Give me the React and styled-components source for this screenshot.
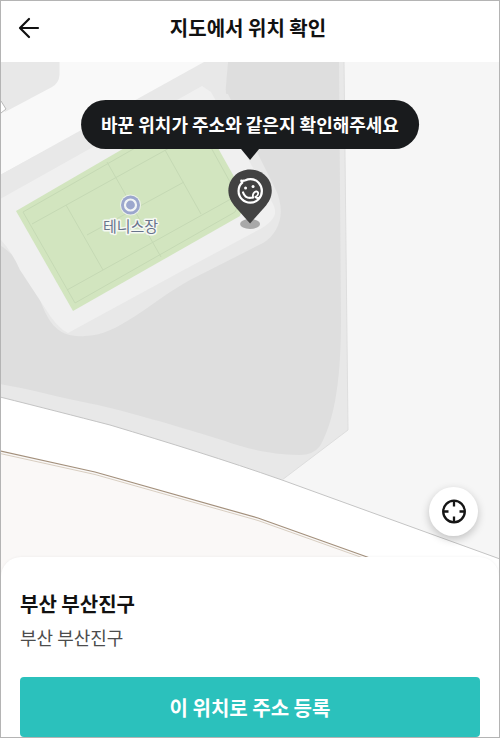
import React from 'react';
import styled, { createGlobalStyle } from 'styled-components';

const colors = {
  ink: '#191b1d',
  mint: '#2bc1bc',
  frame: '#b4b4b4',
};

const GlobalStyle = createGlobalStyle`
  * {
    box-sizing: border-box;
  }

  body {
    margin: 0;
    background: #fff;
    font-family: 'Noto Sans CJK KR', 'Noto Sans', sans-serif;
    color: ${colors.ink};
  }

  button {
    font-family: inherit;
    border: 0;
    padding: 0;
    cursor: pointer;
  }
`;

const Screen = styled.div`
  display: flex;
  flex-direction: column;
  height: 100vh;
  min-height: 480px;
  border: 1px solid ${colors.frame};
  overflow: hidden;
`;

const Header = styled.header`
  display: grid;
  grid-template-columns: 56px 1fr 60px;
  align-items: center;
  height: 61px;
  padding-bottom: 8px;
  flex-shrink: 0;
`;

const BackButton = styled.button`
  display: flex;
  justify-content: center;
  background: none;
`;

const Title = styled.h1`
  margin: 0;
  font-size: 20px;
  line-height: 28px;
  font-weight: 700;
  text-align: center;
  color: #111;
`;

const MapArea = styled.main`
  position: relative;
  flex: 1;
  min-height: 0;
`;

const MapDrawing = styled.svg`
  display: block;
  width: 100%;
  height: 100%;
`;

const Marker = styled.div`
  position: absolute;
  top: 38px;
  left: 50%;
  transform: translateX(-50%);
  display: flex;
  flex-direction: column;
  align-items: center;
`;

const Tooltip = styled.p`
  margin: 0;
  padding: 11px 20px;
  border-radius: 25px;
  background: ${colors.ink};
  color: #fff;
  font-size: 18px;
  line-height: 27px;
  font-weight: 700;
  white-space: nowrap;
`;

const TooltipArrow = styled.span`
  border: 9px solid transparent;
  border-top: 11px solid ${colors.ink};
  border-bottom-width: 8px;
`;

const LocateButton = styled.button`
  position: absolute;
  right: 21px;
  bottom: 41px;
  display: flex;
  align-items: center;
  justify-content: center;
  width: 49px;
  height: 49px;
  border-radius: 50%;
  background: #fff;
  box-shadow: 0 3px 8px rgba(0, 0, 0, 0.22);
`;

const Sheet = styled.section`
  position: relative;
  flex-shrink: 0;
  margin-top: -20px;
  padding: 32px 19px 0;
  border-radius: 20px 20px 0 0;
  background: #fff;
  box-shadow: 0 0 3px rgba(0, 0, 0, 0.06);
`;

const Place = styled.h2`
  margin: 0 0 4px;
  font-size: 20px;
  line-height: 30px;
  font-weight: 700;
  color: #111;
`;

const Address = styled.p`
  margin: 0 0 26px;
  font-size: 18px;
  line-height: 28px;
  color: #4c4c4c;
`;

const SubmitButton = styled.button`
  display: block;
  width: 100%;
  height: 60px;
  border-radius: 4px;
  background: ${colors.mint};
  color: #fff;
  font-size: 20px;
  font-weight: 700;
`;

const ArrowIcon = () => (
  <svg width="22" height="22" viewBox="0 0 22 22" fill="none" stroke="#111" strokeWidth="2.2" strokeLinecap="round" strokeLinejoin="round">
    <path d="M20 11H2.500M11 2 2 11l9 9" />
  </svg>
);

const LocateIcon = () => (
  <svg width="26" height="26" viewBox="0 0 26 26" fill="none" stroke="#151515" strokeWidth="2.3">
    <circle cx="13" cy="12.500" r="10.800" />
    <path d="M13 2v5.500M13 17.500v5.500M2 12.500h5.500M18.500 12.500h5.500" />
  </svg>
);

const PinIcon = () => (
  <svg width="46" height="64" viewBox="0 0 46 64" fill="none">
    <ellipse cx="23" cy="56" rx="10" ry="5" fill="#a8a8a8" />
    <path d="M23 1.500C10.800 1.500 1.300 11 1.300 22.500c0 7 3 11.500 7 16.500L23 55.500 37.700 39c4-5 7-9.500 7-16.500C44.700 11 35.200 1.500 23 1.500Z" fill="#424242" />
    <g stroke="#fff" strokeWidth="2.200" strokeLinecap="round" strokeLinejoin="round">
      <path d="M18.500 12.300c1.500-.8 3-1.100 5-1.100 6.500 0 11.300 5.300 11.300 11.800S29.700 34.700 23.200 34.700 11.500 29.500 11.500 23c0-3.300 1.300-6.300 3.700-8.300-.8-.6-1-1.300-1-2 1.500.3 2.900.1 4.300-.4Z" />
      <path d="M16 24.500c1.500 4.300 5 6.300 10 5" />
      <path d="M26 29.500c-.8-3 1-6.200 3.500-6 2.500.3 2 4.300-1.200 5.300M28.300 29c1.400 1.200 3 1.200 4.400.2" strokeWidth="1.800" />
    </g>
    <circle cx="18.500" cy="20" r="1.500" fill="#fff" />
    <circle cx="26" cy="18.500" r="1.500" fill="#fff" />
  </svg>
);

const MapLabel = styled.text`
  font-size: 15px;
  fill: #68748c;
  stroke: #f5f8f2;
  stroke-width: 3px;
  stroke-linejoin: round;
  paint-order: stroke;
  text-anchor: middle;
`;

const StreetMap = () => (
  <MapDrawing viewBox="1 62 498 515" preserveAspectRatio="xMidYMin slice">
    <rect x="1" y="62" width="498" height="515" fill="#f6f6f6" />

    {/* land around the court */}
    <path d="M0 62H344L348 430 282 480 0 397Z" fill="#e8e8e8" />
    <path d="M228 62H339L341 320C341 390 332 425 320 446Q313 455 300 455C270 455 245 448 225 441C180 427 120 409 83 402C50 395 25 388 0 384V240L150 100 225 97Z" fill="#dedede" />
    <path d="M228 62C222 80 225 95 232 110L150 100 204 62Z" fill="#e8e8e8" />

    {/* path and pavement */}
    <path d="M0 62H204L0 175Z" fill="#f9f9f9" />
    <path d="M0 175 150 94H228L275 188C286 210 281 232 263 243L190 280C150 302 118 336 85 336C60 338 50 325 42 305C35 285 25 262 0 245Z" fill="#e8e8e8" />
    <path d="M0 199 202 86 211 92 273 204C278 214 274 220 262 228L180 272 68 333Q57 328 45 308L20 270Q11 250 0 239Z" fill="#f0f0f0" />
    <path d="M0 62H59.500V75Q59 83 52 87L5 112 0 105Z" fill="#e8e8e8" />
    <path d="M1 101 6 109 1 113" fill="#fff" stroke="#b8b8b8" strokeWidth="1" />

    {/* tennis court */}
    <path d="M16 211 195 107 246 198 240 216 73 311Z" fill="#d2e5bf" />
    <g fill="none" stroke="#c5d9b4" strokeWidth="1">
      <path d="M23 212 193 115 240 200 235 212 75 303Z" />
      <path d="M32 224 200 131M67 290 238 195M66 205 103 270M87 235 184 182M107 162 161 257M165 150 201 214" />
    </g>

    {/* roads */}
    <path d="M0 397C40 407 75 416 110 425C170 443 225 460 282 480L500 559V580H0Z" fill="#fff" />
    <path d="M0 397C40 407 75 416 110 425C170 443 225 460 282 480L500 559" fill="none" stroke="#c4c4c4" strokeWidth="1" />
    <path d="M348 430 282 480M344 62 348 430" stroke="#dedede" strokeWidth="1" />
    <path d="M0 451 95 472 258 518 367 557V580H0Z" fill="#faf8f7" />
    <path d="M0 451 95 472 258 518 370 558" fill="none" stroke="#a3907c" strokeWidth="1.200" />
    <path d="M0 453.500 95 474.500 258 520.500 366 559" fill="none" stroke="#d8cec1" strokeWidth="1" />

    {/* place of interest */}
    <circle cx="130.500" cy="205" r="10.500" fill="#edf3e9" />
    <circle cx="130.500" cy="205" r="9.500" fill="#9ca7cd" />
    <circle cx="130.500" cy="205" r="5.500" fill="#9ca7cd" stroke="#f2f5f5" strokeWidth="2.200" />
    <MapLabel x="130.500" y="232">테니스장</MapLabel>
  </MapDrawing>
);

export default function App() {
  return (
    <>
      <GlobalStyle />
      <Screen>
        <Header>
          <BackButton type="button" aria-label="뒤로">
            <ArrowIcon />
          </BackButton>
          <Title>지도에서 위치 확인</Title>
        </Header>
        <MapArea>
          <StreetMap />
          <Marker>
            <Tooltip>바꾼 위치가 주소와 같은지 확인해주세요</Tooltip>
            <TooltipArrow />
            <PinIcon />
          </Marker>
          <LocateButton type="button" aria-label="현재 위치">
            <LocateIcon />
          </LocateButton>
        </MapArea>
        <Sheet>
          <Place>부산 부산진구</Place>
          <Address>부산 부산진구</Address>
          <SubmitButton type="button">이 위치로 주소 등록</SubmitButton>
        </Sheet>
      </Screen>
    </>
  );
}
